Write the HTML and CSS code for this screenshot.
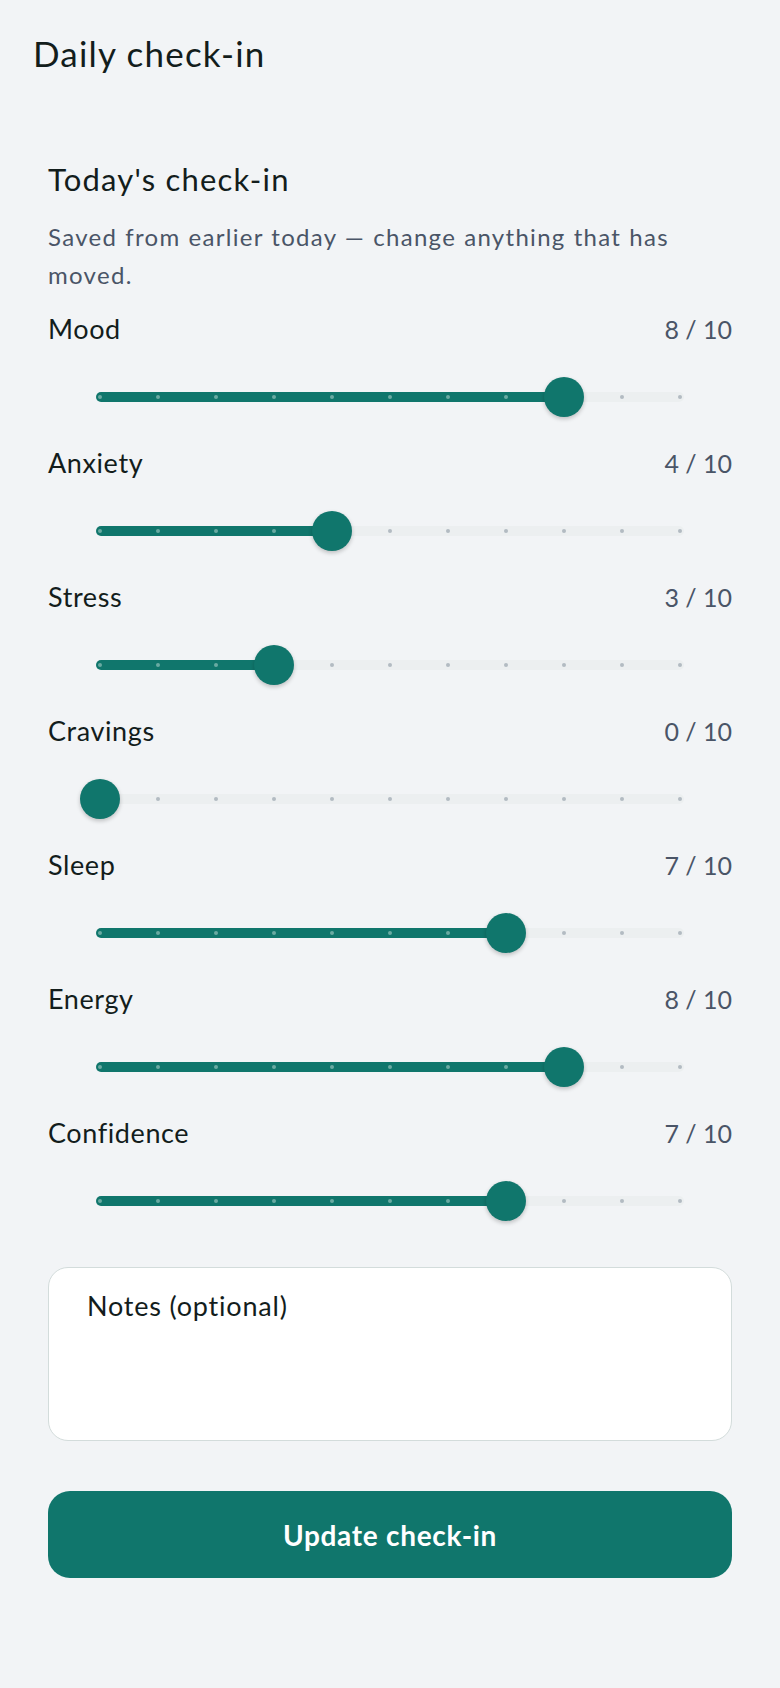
FILE: index.html
```html
<!DOCTYPE html>
<html lang="en">
<head>
<meta charset="utf-8">
<meta name="viewport" content="width=device-width, initial-scale=1">
<title>Daily check-in</title>
<link rel="stylesheet" href="styles.css">
</head>
<body>
<div class="page">
  <header class="topbar">
    <h1 class="title">Daily check-in</h1>
  </header>
  <main class="card">
    <h2 class="card-title">Today's check-in</h2>
    <p class="card-sub">Saved from earlier today — change anything that has moved.</p>

    <div class="rows">
      <div class="row" style="--v:8">
        <div class="row-head"><span class="row-label">Mood</span><span class="row-value">8 / 10</span></div>
        <div class="slider"><div class="track"><div class="fill"></div><div class="dots"><i class="on"></i><i class="on"></i><i class="on"></i><i class="on"></i><i class="on"></i><i class="on"></i><i class="on"></i><i class="on"></i><i class="on"></i><i></i><i></i></div><div class="thumb"></div></div></div>
      </div>
      <div class="row" style="--v:4">
        <div class="row-head"><span class="row-label">Anxiety</span><span class="row-value">4 / 10</span></div>
        <div class="slider"><div class="track"><div class="fill"></div><div class="dots"><i class="on"></i><i class="on"></i><i class="on"></i><i class="on"></i><i class="on"></i><i></i><i></i><i></i><i></i><i></i><i></i></div><div class="thumb"></div></div></div>
      </div>
      <div class="row" style="--v:3">
        <div class="row-head"><span class="row-label">Stress</span><span class="row-value">3 / 10</span></div>
        <div class="slider"><div class="track"><div class="fill"></div><div class="dots"><i class="on"></i><i class="on"></i><i class="on"></i><i class="on"></i><i></i><i></i><i></i><i></i><i></i><i></i><i></i></div><div class="thumb"></div></div></div>
      </div>
      <div class="row" style="--v:0">
        <div class="row-head"><span class="row-label">Cravings</span><span class="row-value">0 / 10</span></div>
        <div class="slider"><div class="track"><div class="fill"></div><div class="dots"><i class="on"></i><i></i><i></i><i></i><i></i><i></i><i></i><i></i><i></i><i></i><i></i></div><div class="thumb"></div></div></div>
      </div>
      <div class="row" style="--v:7">
        <div class="row-head"><span class="row-label">Sleep</span><span class="row-value">7 / 10</span></div>
        <div class="slider"><div class="track"><div class="fill"></div><div class="dots"><i class="on"></i><i class="on"></i><i class="on"></i><i class="on"></i><i class="on"></i><i class="on"></i><i class="on"></i><i class="on"></i><i></i><i></i><i></i></div><div class="thumb"></div></div></div>
      </div>
      <div class="row" style="--v:8">
        <div class="row-head"><span class="row-label">Energy</span><span class="row-value">8 / 10</span></div>
        <div class="slider"><div class="track"><div class="fill"></div><div class="dots"><i class="on"></i><i class="on"></i><i class="on"></i><i class="on"></i><i class="on"></i><i class="on"></i><i class="on"></i><i class="on"></i><i class="on"></i><i></i><i></i></div><div class="thumb"></div></div></div>
      </div>
      <div class="row" style="--v:7">
        <div class="row-head"><span class="row-label">Confidence</span><span class="row-value">7 / 10</span></div>
        <div class="slider"><div class="track"><div class="fill"></div><div class="dots"><i class="on"></i><i class="on"></i><i class="on"></i><i class="on"></i><i class="on"></i><i class="on"></i><i class="on"></i><i class="on"></i><i></i><i></i><i></i></div><div class="thumb"></div></div></div>
      </div>
    </div>

    <textarea class="notes" placeholder="Notes (optional)"></textarea>

    <button class="submit" type="button">Update check-in</button>
  </main>
</div>
</body>
</html>
```

FILE: styles.css
```css
* { box-sizing: border-box; }

html, body {
  margin: 0;
  padding: 0;
  background: #f2f4f6;
}

body {
  font-family: Lato, "Noto Sans", "Liberation Sans", sans-serif;
  color: #131d1c;
}

.page {
  min-height: 1688px;
}

.topbar {
  padding: 33px 33px 0;
}

.title {
  margin: 0;
  font-size: 35px;
  line-height: 40px;
  font-weight: 400;
  letter-spacing: 1.2px;
  color: #131d1c;
}

.card {
  margin-top: 86px;
  padding: 0 48px;
  display: flex;
  flex-direction: column;
}

.card-title {
  margin: 0;
  font-size: 31px;
  line-height: 40px;
  font-weight: 400;
  letter-spacing: 1.2px;
  color: #131d1c;
}

.card-sub {
  margin: 19px 0 0;
  font-size: 24px;
  line-height: 38px;
  letter-spacing: 1.3px;
  word-spacing: 0.6px;
  color: #4a5567;
}

.rows {
  margin-top: 17px;
  display: flex;
  flex-direction: column;
  gap: 16px;
}

.row-head {
  display: flex;
  justify-content: space-between;
  align-items: baseline;
  height: 36px;
}

.row-label {
  font-size: 27px;
  line-height: 36px;
  letter-spacing: 0.6px;
  color: #131d1c;
}

.row-value {
  font-size: 25px;
  line-height: 36px;
  color: #4a5567;
}

.slider {
  margin: 18px 48px 0;
  height: 64px;
  display: flex;
  align-items: center;
}

.track {
  position: relative;
  width: 100%;
  height: 10px;
  border-radius: 5px;
  background: #eceff0;
}

.fill {
  position: absolute;
  left: 0;
  top: 0;
  bottom: 0;
  width: calc(4px + var(--v) * 58px);
  border-radius: 5px;
  background: #10766c;
}

.dots {
  position: relative;
  height: 100%;
  padding: 0 2px;
  display: flex;
  justify-content: space-between;
  align-items: center;
}

.dots i {
  display: block;
  width: 4px;
  height: 4px;
  border-radius: 50%;
  background: #b3bbc2;
}

.dots i.on {
  background: #69aaa2;
}

.thumb {
  position: absolute;
  top: 50%;
  left: calc(4px + var(--v) * 58px - 20px);
  width: 40px;
  height: 40px;
  margin-top: -20px;
  border-radius: 50%;
  background: #10766c;
  box-shadow: 0 2px 4px rgba(0, 0, 0, 0.22);
}

.notes {
  display: block;
  margin-top: 34px;
  width: 100%;
  height: 174px;
  padding: 20px 38px;
  border: 1.5px solid #d3dcdb;
  border-radius: 20px;
  background: #ffffff;
  font-family: Lato, "Noto Sans", "Liberation Sans", sans-serif;
  font-size: 27px;
  line-height: 36px;
  letter-spacing: 0.8px;
  color: #131d1c;
  resize: none;
  outline: none;
}

.notes::placeholder {
  color: #131d1c;
  opacity: 1;
}

.submit {
  display: block;
  margin-top: 50px;
  width: 100%;
  height: 87px;
  border: 0;
  border-radius: 22px;
  background: #10766c;
  color: #ffffff;
  font-family: Lato, "Noto Sans", "Liberation Sans", sans-serif;
  font-size: 28px;
  font-weight: 700;
  letter-spacing: 0.7px;
  cursor: pointer;
}
```
